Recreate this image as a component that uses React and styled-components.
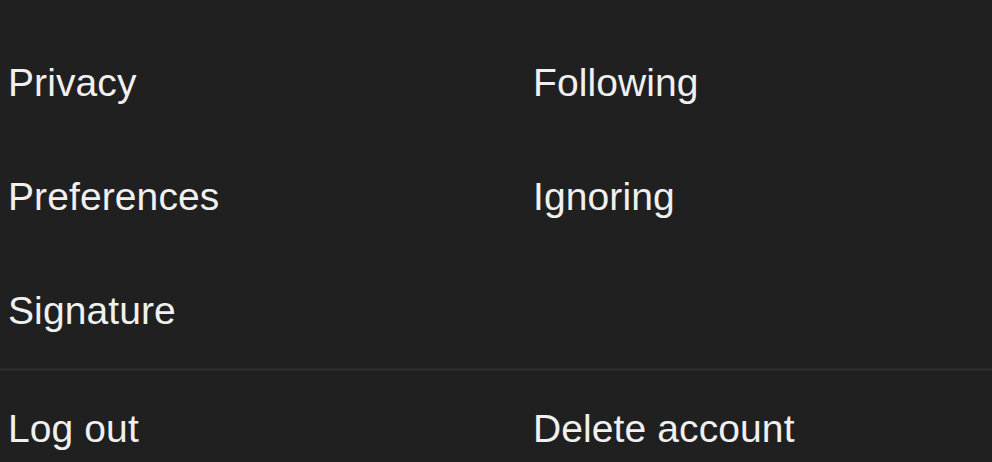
import React from "react";
import styled, { createGlobalStyle } from "styled-components";

const Global = createGlobalStyle`
  html, body { margin: 0; padding: 0; background: #202020; }
  body { font-family: "Liberation Sans", Arial, sans-serif; }
`;

const Page = styled.div`
  width: 992px;
  height: 462px;
  background: #202020;
  overflow: hidden;
`;

const Section = styled.div`
  display: grid;
  grid-template-columns: 525px 1fr;
  padding: ${(p) => p.$pad} 0 0 8px;
`;

const Item = styled.div`
  height: 114px;
  line-height: 114px;
  font-size: 39px;
  color: #f0f0f0;
  letter-spacing: 0.1px;
  white-space: nowrap;
`;

const Divider = styled.div`
  height: 3px;
  background: #2b2b2b;
`;

export default function App() {
  return (
    <Page>
      <Global />
      <Section $pad="26px">
        <Item>Privacy</Item>
        <Item>Following</Item>
        <Item>Preferences</Item>
        <Item>Ignoring</Item>
        <Item>Signature</Item>
        <Item />
      </Section>
      <Divider />
      <Section $pad="1px">
        <Item>Log out</Item>
        <Item>Delete account</Item>
      </Section>
    </Page>
  );
}
